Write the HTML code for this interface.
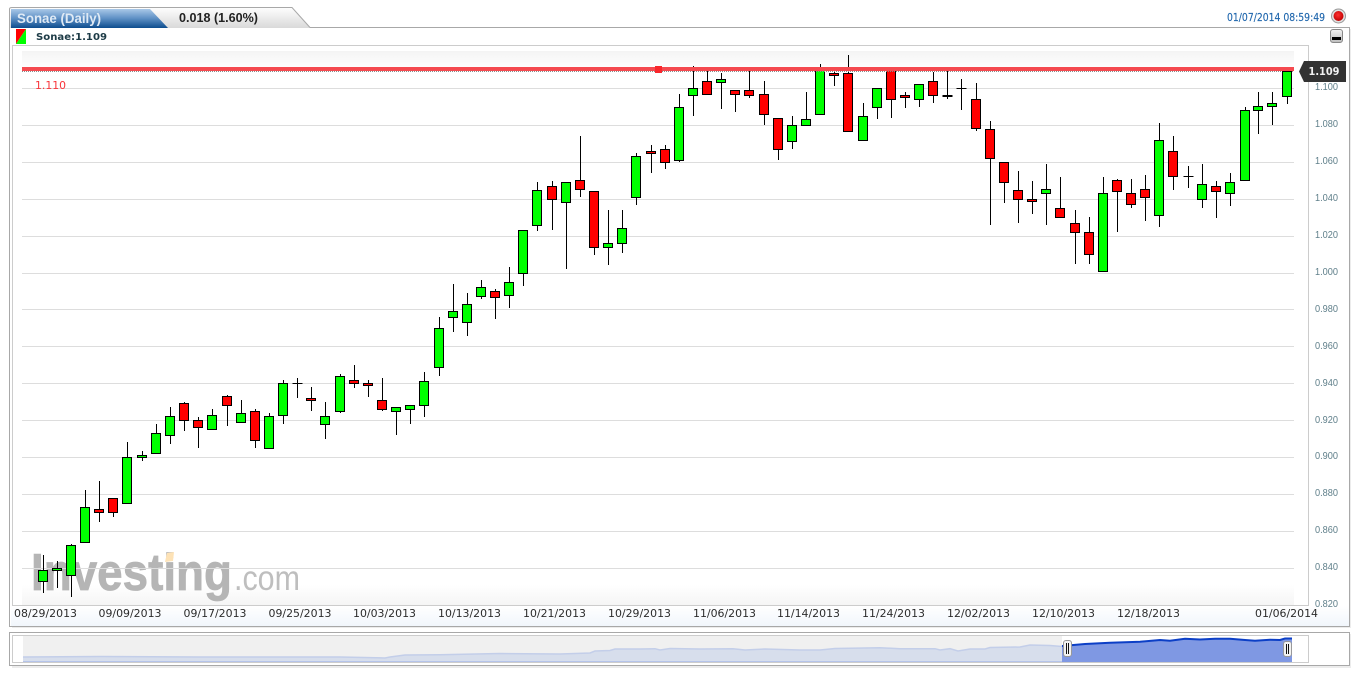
<!DOCTYPE html>
<html><head><meta charset="utf-8"><title>Sonae (Daily)</title>
<style>html,body{margin:0;padding:0;background:#fff;width:1360px;height:675px;overflow:hidden}svg{display:block}</style></head>
<body>
<svg xmlns="http://www.w3.org/2000/svg" width="1360" height="675" viewBox="0 0 1360 675">
<defs>
<linearGradient id="b" x1="0" y1="0" x2="0" y2="1"><stop offset="0" stop-color="#a9c8e8"/><stop offset=".5" stop-color="#5d8fc4"/><stop offset="1" stop-color="#0d4c8e"/></linearGradient>
<linearGradient id="w" x1="0" y1="0" x2="0" y2="1"><stop offset="0" stop-color="#fff"/><stop offset="1" stop-color="#d9d9d9"/></linearGradient>
<linearGradient id="t" x1="0" y1="0" x2="0" y2="1"><stop offset="0" stop-color="#f4f4f4"/><stop offset="1" stop-color="#fff"/></linearGradient>
<linearGradient id="u" x1="0" y1="0" x2="0" y2="1"><stop offset="0" stop-color="#fff"/><stop offset="1" stop-color="#f5f5f5"/></linearGradient>
<linearGradient id="v" x1="0" y1="0" x2="0" y2="1"><stop offset="0" stop-color="#fff"/><stop offset="1" stop-color="#f1f6fc"/></linearGradient>
<linearGradient id="h" x1="0" y1="0" x2="0" y2="1"><stop offset="0" stop-color="#f4f4f4"/><stop offset="1" stop-color="#bdbdbd"/></linearGradient>
<radialGradient id="r" cx=".45" cy=".4" r=".6"><stop offset="0" stop-color="#ff3030"/><stop offset="1" stop-color="#c00000"/></radialGradient>
</defs>

<!-- main panel -->
<rect x="12" y="29" width="1339" height="599" fill="#ececec"/>
<rect x="9.5" y="27.5" width="1340" height="599" fill="#fff" stroke="#a8a8a8"/>
<rect x="11" y="606" width="1338" height="20" fill="url(#v)"/>
<rect x="12.5" y="45.5" width="1296" height="560" fill="#fff" stroke="#ccc"/>
<rect x="22" y="51" width="1272" height="18" fill="url(#t)"/>
<rect x="22" y="585" width="1272" height="20" fill="url(#u)"/>

<!-- tabs -->
<path d="M10 28V9Q10 7 12 7H292L310 27V28Z" fill="url(#w)"/>
<path d="M9.5 28V9Q9.5 7.5 12 7.5H292L310 27.5" fill="none" stroke="#a8a8a8"/>
<path d="M11 28V9H150L168 28Z" fill="url(#b)"/>
<text x="17" y="23" font-family="'Liberation Sans',sans-serif" font-size="14" font-weight="bold" fill="#dfeaf5" textLength="84" lengthAdjust="spacingAndGlyphs">Sonae (Daily)</text>
<text x="179" y="22" font-family="'Liberation Sans',sans-serif" font-size="12.5" font-weight="bold" fill="#222" textLength="79" lengthAdjust="spacingAndGlyphs">0.018 (1.60%)</text>

<!-- legend -->
<path d="M16 29H26L16 44Z" fill="#f00"/><path d="M26 29V44H16Z" fill="#0f0"/>
<text x="36" y="40" font-family="'DejaVu Sans',sans-serif" font-size="10" font-weight="bold" fill="#1d3b46" textLength="71" lengthAdjust="spacingAndGlyphs">Sonae:1.109</text>

<!-- date + dot + minimise -->
<text x="1227" y="21" font-family="'DejaVu Sans',sans-serif" font-size="10.5" fill="#2268ae" stroke="#2268ae" stroke-width=".15" textLength="98" lengthAdjust="spacingAndGlyphs">01/07/2014 08:59:49</text>
<circle cx="1338.5" cy="16" r="7" fill="#e0e0e0" stroke="#999"/>
<circle cx="1338.5" cy="16" r="5" fill="url(#r)"/>
<rect x="1330.5" y="29.5" width="12" height="13" rx="2.5" fill="url(#h)" stroke="#888"/>
<rect x="1332" y="37" width="9" height="3" fill="#000"/>

<!-- watermark -->
<text x="31" y="590" font-family="'Liberation Sans',sans-serif" font-size="52" font-weight="bold" fill="#b5b5b5" stroke="#b5b5b5" stroke-width=".8" textLength="201" lengthAdjust="spacingAndGlyphs">Investing</text>
<text x="234" y="590" font-family="'Liberation Sans',sans-serif" font-size="35" fill="#bebebe" textLength="66" lengthAdjust="spacingAndGlyphs">.com</text>
<path d="M167 553L174 552 173 561 165 562Z" fill="#fde2b6"/>

<!-- grid -->
<path d="M22 88.5H1294M22 125.5H1294M22 162.5H1294M22 199.5H1294M22 236.5H1294M22 273.5H1294M22 309.5H1294M22 346.5H1294M22 383.5H1294M22 420.5H1294M22 457.5H1294M22 494.5H1294M22 531.5H1294M22 568.5H1294" stroke="#ddd" stroke-width="1"/>

<!-- wicks -->
<path fill="none" stroke="#000" stroke-width="1" shape-rendering="crispEdges" d="M43.5 555V593M57.5 561V588M71.5 544V597M85.5 490V542M99.5 481V522M113.5 498V517M127.5 442V503M142.5 451V461M156.5 424V453M170.5 407V444M184.5 402V431M198.5 417V448M212.5 409V429M227.5 395V426M241.5 400V422M255.5 409V448M269.5 413V448M283.5 380V424M297.5 378V398M311.5 387V411M325.5 402V439M340.5 374V413M354.5 365V388M368.5 380V397M382.5 378V411M396.5 407V435M410.5 405V424M424.5 372V417M439.5 317V376M453.5 284V332M467.5 293V336M481.5 280V299M495.5 289V319M509.5 267V308M523.5 230V286M537.5 182V231M552.5 181V230M566.5 182V269M580.5 136V197M594.5 191V255M608.5 210V265M622.5 210V253M636.5 153V205M651.5 145V173M665.5 145V169M679.5 94V162M693.5 66V116M707.5 70V94M721.5 73V109M735.5 90V112M749.5 70V98M764.5 81V125M778.5 118V160M792.5 116V149M806.5 92V125M820.5 64V114M834.5 71V86M848.5 55V132M863.5 103V140M877.5 88V119M891.5 68V118M905.5 92V108M919.5 84V107M933.5 72V103M947.5 71V99M961.5 79V110M976.5 83V131M990.5 121V225M1004.5 162V203M1018.5 171V223M1032.5 181V214M1046.5 164V225M1060.5 177V217M1075.5 210V264M1089.5 217V264M1103.5 177V271M1117.5 179V232M1131.5 179V208M1145.5 175V221M1159.5 123V227M1173.5 136V190M1188.5 166V188M1202.5 164V208M1216.5 181V218M1230.5 173V206M1245.5 107V180M1258.5 92V134M1272.5 92V125M1287.5 71V104M292.5 383.5H302.5M956.5 88.5H966.5M1183.5 176.5H1193.5M942.5 95.5H952.5M942.5 96.5H952.5"/>

<!-- green bodies -->
<path fill="#0f0" stroke="#000" stroke-width="1" shape-rendering="crispEdges" d="M38.5 570.5h9v11h-9zM52.5 568.5h9v2h-9zM66.5 545.5h9v30h-9zM80.5 507.5h9v35h-9zM122.5 457.5h9v46h-9zM137.5 455.5h9v2h-9zM151.5 433.5h9v20h-9zM165.5 416.5h9v19h-9zM207.5 415.5h9v14h-9zM236.5 413.5h9v9h-9zM264.5 416.5h9v32h-9zM278.5 383.5h9v32h-9zM320.5 416.5h9v8h-9zM335.5 376.5h9v35h-9zM391.5 407.5h9v4h-9zM405.5 405.5h9v4h-9zM419.5 381.5h9v24h-9zM434.5 328.5h9v39h-9zM448.5 311.5h9v6h-9zM462.5 304.5h9v18h-9zM476.5 287.5h9v9h-9zM504.5 282.5h9v13h-9zM518.5 230.5h9v43h-9zM532.5 190.5h9v35h-9zM561.5 182.5h9v20h-9zM603.5 243.5h9v4h-9zM617.5 228.5h9v15h-9zM631.5 156.5h9v41h-9zM674.5 107.5h9v53h-9zM688.5 88.5h9v7h-9zM716.5 79.5h9v3h-9zM787.5 125.5h9v16h-9zM801.5 119.5h9v6h-9zM815.5 70.5h9v44h-9zM858.5 116.5h9v24h-9zM872.5 88.5h9v19h-9zM914.5 84.5h9v15h-9zM1041.5 189.5h9v4h-9zM1098.5 193.5h9v78h-9zM1154.5 140.5h9v75h-9zM1197.5 184.5h9v15h-9zM1225.5 182.5h9v11h-9zM1240.5 110.5h9v70h-9zM1253.5 106.5h9v4h-9zM1267.5 103.5h9v3h-9zM1282.5 71.5h9v25h-9z"/>

<!-- red bodies -->
<path fill="#f00" stroke="#000" stroke-width="1" shape-rendering="crispEdges" d="M94.5 509.5h9v3h-9zM108.5 498.5h9v14h-9zM179.5 403.5h9v17h-9zM193.5 420.5h9v7h-9zM222.5 396.5h9v9h-9zM250.5 411.5h9v29h-9zM306.5 398.5h9v2h-9zM349.5 380.5h9v3h-9zM363.5 383.5h9v2h-9zM377.5 400.5h9v9h-9zM490.5 291.5h9v6h-9zM547.5 186.5h9v13h-9zM575.5 180.5h9v9h-9zM589.5 191.5h9v56h-9zM646.5 151.5h9v2h-9zM660.5 149.5h9v13h-9zM702.5 81.5h9v13h-9zM730.5 90.5h9v4h-9zM744.5 90.5h9v5h-9zM759.5 94.5h9v20h-9zM773.5 118.5h9v31h-9zM829.5 73.5h9v2h-9zM843.5 73.5h9v58h-9zM886.5 68.5h9v31h-9zM900.5 95.5h9v2h-9zM928.5 81.5h9v14h-9zM971.5 99.5h9v29h-9zM985.5 129.5h9v29h-9zM999.5 162.5h9v20h-9zM1013.5 190.5h9v9h-9zM1027.5 199.5h9v2h-9zM1055.5 208.5h9v9h-9zM1070.5 223.5h9v9h-9zM1084.5 232.5h9v22h-9zM1112.5 180.5h9v11h-9zM1126.5 193.5h9v11h-9zM1140.5 189.5h9v8h-9zM1168.5 151.5h9v25h-9zM1211.5 186.5h9v5h-9z"/>

<!-- horizontal line -->
<rect x="22" y="67" width="1272" height="4" fill="#f54a50"/>
<path d="M22 71.5H1294" stroke="#8a8a8a" stroke-width="1" stroke-dasharray="1 1"/>
<rect x="1282" y="71" width="10" height="1" fill="#000"/>
<rect x="655" y="66" width="7" height="7" fill="#f9272c"/>
<text x="35" y="89" font-family="'DejaVu Sans',sans-serif" font-size="11" fill="#f8343a" textLength="31" lengthAdjust="spacingAndGlyphs">1.110</text>

<!-- y labels -->
<g font-family="'Liberation Sans',sans-serif" font-size="10" fill="#5f7f8a">
<text x="1315" y="90" textLength="23" lengthAdjust="spacingAndGlyphs">1.100</text>
<text x="1315" y="127" textLength="23" lengthAdjust="spacingAndGlyphs">1.080</text>
<text x="1315" y="164" textLength="23" lengthAdjust="spacingAndGlyphs">1.060</text>
<text x="1315" y="201" textLength="23" lengthAdjust="spacingAndGlyphs">1.040</text>
<text x="1315" y="238" textLength="23" lengthAdjust="spacingAndGlyphs">1.020</text>
<text x="1315" y="275" textLength="23" lengthAdjust="spacingAndGlyphs">1.000</text>
<text x="1315" y="312" textLength="23" lengthAdjust="spacingAndGlyphs">0.980</text>
<text x="1315" y="349" textLength="23" lengthAdjust="spacingAndGlyphs">0.960</text>
<text x="1315" y="386" textLength="23" lengthAdjust="spacingAndGlyphs">0.940</text>
<text x="1315" y="423" textLength="23" lengthAdjust="spacingAndGlyphs">0.920</text>
<text x="1315" y="459" textLength="23" lengthAdjust="spacingAndGlyphs">0.900</text>
<text x="1315" y="496" textLength="23" lengthAdjust="spacingAndGlyphs">0.880</text>
<text x="1315" y="533" textLength="23" lengthAdjust="spacingAndGlyphs">0.860</text>
<text x="1315" y="570" textLength="23" lengthAdjust="spacingAndGlyphs">0.840</text>
<text x="1315" y="607" textLength="23" lengthAdjust="spacingAndGlyphs">0.820</text>
</g>

<!-- price tag -->
<path d="M1304 61H1346V82H1304L1299 71.5Z" fill="#333"/>
<text x="1308.5" y="75" font-family="'DejaVu Sans',sans-serif" font-size="11" font-weight="bold" fill="#f2f2f2" textLength="31" lengthAdjust="spacingAndGlyphs">1.109</text>

<!-- x labels -->
<g font-family="'DejaVu Sans',sans-serif" font-size="11" fill="#2c2c2c">
<text x="14" y="617" textLength="63" lengthAdjust="spacingAndGlyphs">08/29/2013</text>
<text x="98.5" y="617" textLength="63" lengthAdjust="spacingAndGlyphs">09/09/2013</text>
<text x="183.5" y="617" textLength="63" lengthAdjust="spacingAndGlyphs">09/17/2013</text>
<text x="268.5" y="617" textLength="63" lengthAdjust="spacingAndGlyphs">09/25/2013</text>
<text x="353" y="617" textLength="63" lengthAdjust="spacingAndGlyphs">10/03/2013</text>
<text x="438" y="617" textLength="63" lengthAdjust="spacingAndGlyphs">10/13/2013</text>
<text x="523" y="617" textLength="63" lengthAdjust="spacingAndGlyphs">10/21/2013</text>
<text x="608" y="617" textLength="63" lengthAdjust="spacingAndGlyphs">10/29/2013</text>
<text x="693" y="617" textLength="63" lengthAdjust="spacingAndGlyphs">11/06/2013</text>
<text x="777" y="617" textLength="63" lengthAdjust="spacingAndGlyphs">11/14/2013</text>
<text x="862" y="617" textLength="63" lengthAdjust="spacingAndGlyphs">11/24/2013</text>
<text x="947" y="617" textLength="63" lengthAdjust="spacingAndGlyphs">12/02/2013</text>
<text x="1032" y="617" textLength="63" lengthAdjust="spacingAndGlyphs">12/10/2013</text>
<text x="1117" y="617" textLength="63" lengthAdjust="spacingAndGlyphs">12/18/2013</text>
<text x="1255" y="617" textLength="63" lengthAdjust="spacingAndGlyphs">01/06/2014</text>
</g>

<!-- navigator -->
<rect x="12" y="634" width="1339" height="34" fill="#ececec"/>
<rect x="9.5" y="632.5" width="1340" height="33" fill="#fff" stroke="#a8a8a8"/>
<rect x="12.5" y="635.5" width="1296" height="27" fill="#fff" stroke="#ccc"/>
<rect x="23" y="636" width="1039" height="26" fill="#f0f0f0"/>
<path d="M23 657L100 656.5 200 657 340 657 385 658 390 657 405 655 440 654.7 500 653.5 560 654 590 653 595 651 610 650.5 615 649 640 649 655 648.7 660 650 670 648.5 700 649 733 648.7 745 650 765 649 800 650 820 650 835 648.5 880 647.7 900 648.7 935 648.7 940 650 950 648.7 958 651 970 649 985 649 990 647.5 1020 647 1030 645 1050 645.5 1062 646.5V662H23Z" fill="#d7deec"/>
<path d="M23 657L100 656.5 200 657 340 657 385 658 390 657 405 655 440 654.7 500 653.5 560 654 590 653 595 651 610 650.5 615 649 640 649 655 648.7 660 650 670 648.5 700 649 733 648.7 745 650 765 649 800 650 820 650 835 648.5 880 647.7 900 648.7 935 648.7 940 650 950 648.7 958 651 970 649 985 649 990 647.5 1020 647 1030 645 1050 645.5 1062 646.5" fill="none" stroke="#c3cee9" stroke-width="1.5"/>
<path d="M23 661.5H1062" stroke="#b5c4ea" stroke-width="1"/>
<path d="M1062 646L1085 644 1110 642.7 1140 641.7 1160 640 1170 640.7 1185 638.7 1200 639.5 1215 638.7 1230 638.7 1245 640 1255 640.7 1270 639.7 1280 640 1285 638.5 1292 638.5V662H1062Z" fill="#7f98e3"/>
<path d="M1062 646L1085 644 1110 642.7 1140 641.7 1160 640 1170 640.7 1185 638.7 1200 639.5 1215 638.7 1230 638.7 1245 640 1255 640.7 1270 639.7 1280 640 1285 638.5 1292 638.5" fill="none" stroke="#0c3fc6" stroke-width="2"/>
<rect x="1063.5" y="640.5" width="8" height="16" rx="2.5" fill="#f2f2f2" stroke="#999"/>
<path d="M1066.5 643V654M1068.5 643V654" stroke="#111" stroke-width="1"/>
<rect x="1283.5" y="641.5" width="8" height="15" rx="2.5" fill="#f2f2f2" stroke="#999"/>
<path d="M1286.5 644V654M1288.5 644V654" stroke="#111" stroke-width="1"/>
</svg>
</body></html>
